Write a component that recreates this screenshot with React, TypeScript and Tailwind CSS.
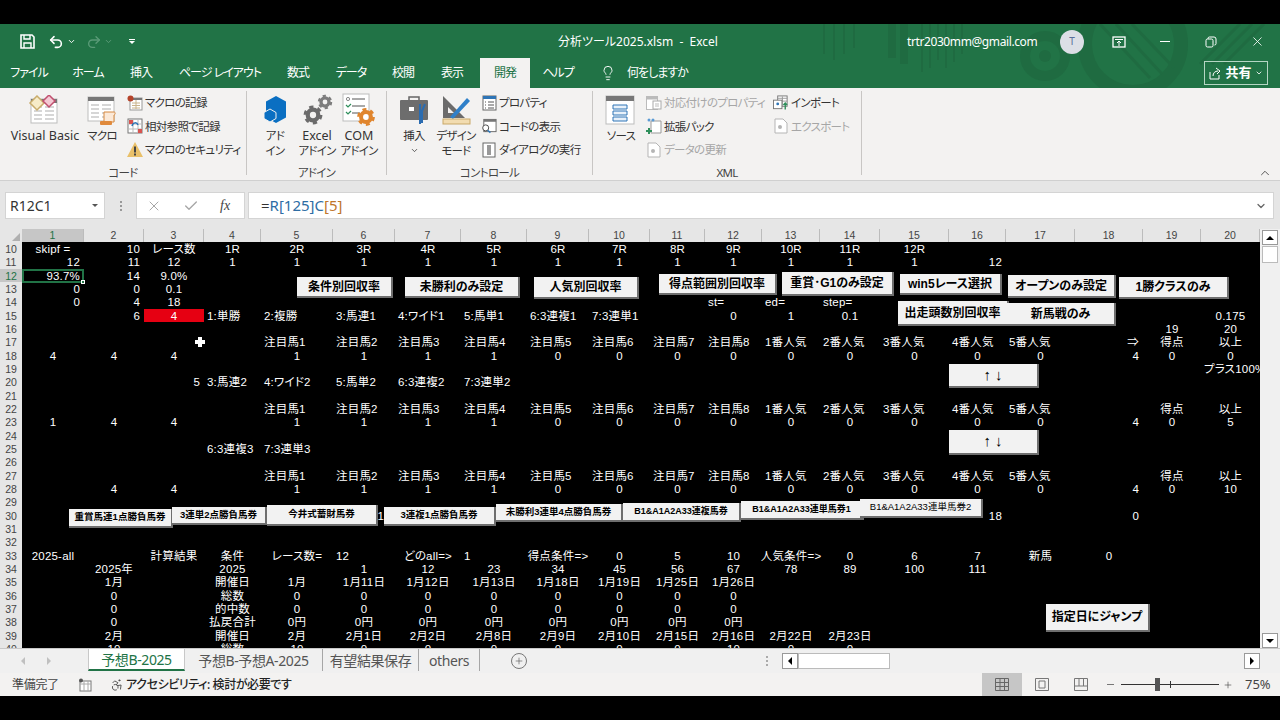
import { Accessibility, ChevronDown, ChevronUp, Lightbulb, Plus, Redo2, Undo2, X, Check } from 'lucide-react';
import React from 'react';

type Cell = { c: number; t: string; a?: 'l' | 'r' | 'c' | 'x'; red?: boolean };

const alignClass = {
  c: 'justify-center',
  l: 'justify-start pl-[3px]',
  r: 'justify-end pr-[4px]',
  x: 'justify-end pr-[11px]',
};

const colNames = Array.from({ length: 20 }, (_, i) => i + 1);
const gridCols = 'grid grid-cols-[62px_60px_60px_57px_72px_62px_66px_66px_62px_61px_55px_57px_58px_60px_69px_57px_69px_68px_58px_59px]';

const seq = (start: number, list: (string | number)[], a?: Cell['a']): Cell[] =>
  list.map((t, i) => ({ c: start + i, t: String(t), a }));

const watch = (): Cell[] =>
  seq(5, ['注目馬1', '注目馬2', '注目馬3', '注目馬4', '注目馬5', '注目馬6', '注目馬7', '注目馬8', '1番人気', '2番人気', '3番人気', '4番人気', '5番人気'], 'l');

const vals = [1, 1, 1, 1, 0, 0, 0, 0, 0, 0, 0, 0, 0];

const rows: Record<number, Cell[]> = {
  10: [
    { c: 1, t: 'skipf =' },
    { c: 2, t: '10', a: 'r' },
    { c: 3, t: 'レース数' },
    ...seq(4, ['1R', '2R', '3R', '4R', '5R', '6R', '7R', '8R', '9R', '10R', '11R', '12R']),
  ],
  11: [
    { c: 1, t: '12', a: 'r' },
    { c: 2, t: '11', a: 'r' },
    { c: 3, t: '12' },
    ...seq(4, [1, 1, 1, 1, 1, 1, 1, 1, 1, 1, 1, 1]),
    { c: 16, t: '12', a: 'r' },
  ],
  12: [
    { c: 1, t: '93.7%', a: 'r' },
    { c: 2, t: '14', a: 'r' },
    { c: 3, t: '9.0%' },
  ],
  13: [
    { c: 1, t: '0', a: 'r' },
    { c: 2, t: '0', a: 'r' },
    { c: 3, t: '0.1' },
  ],
  14: [
    { c: 1, t: '0', a: 'r' },
    { c: 2, t: '4', a: 'r' },
    { c: 3, t: '18' },
    { c: 12, t: 'st=', a: 'l' },
    { c: 13, t: 'ed=', a: 'l' },
    { c: 14, t: 'step=', a: 'l' },
  ],
  15: [
    { c: 2, t: '6', a: 'r' },
    { c: 3, t: '4', red: true },
    { c: 4, t: '1:単勝', a: 'l' },
    { c: 5, t: '2:複勝', a: 'l' },
    { c: 6, t: '3:馬連1', a: 'l' },
    { c: 7, t: '4:ワイド1', a: 'l' },
    { c: 8, t: '5:馬単1', a: 'l' },
    { c: 9, t: '6:3連複1', a: 'l' },
    { c: 10, t: '7:3連単1', a: 'l' },
    { c: 12, t: '0' },
    { c: 13, t: '1' },
    { c: 14, t: '0.1' },
    { c: 20, t: '0.175' },
  ],
  16: seq(19, [19, 20]),
  17: [...watch(), { c: 18, t: '⇒', a: 'r' }, ...seq(19, ['得点', '以上'])],
  18: [...seq(1, [4, 4, 4]), ...seq(5, vals), { c: 18, t: '4', a: 'r' }, ...seq(19, [0, 0])],
  19: [{ c: 20, t: 'プラス100%を', a: 'l' }],
  20: [
    { c: 3, t: '5', a: 'r' },
    { c: 4, t: '3:馬連2', a: 'l' },
    { c: 5, t: '4:ワイド2', a: 'l' },
    { c: 6, t: '5:馬単2', a: 'l' },
    { c: 7, t: '6:3連複2', a: 'l' },
    { c: 8, t: '7:3連単2', a: 'l' },
  ],
  22: [...watch(), ...seq(19, ['得点', '以上'])],
  23: [...seq(1, [1, 4, 4]), ...seq(5, vals), { c: 18, t: '4', a: 'r' }, ...seq(19, [0, 5])],
  25: [
    { c: 4, t: '6:3連複3', a: 'l' },
    { c: 5, t: '7:3連単3', a: 'l' },
  ],
  27: [...watch(), ...seq(19, ['得点', '以上'])],
  28: [...seq(2, [4, 4]), ...seq(5, vals), { c: 18, t: '4', a: 'r' }, ...seq(19, [0, 10])],
  30: [
    { c: 6, t: '1', a: 'x' },
    { c: 16, t: '18', a: 'r' },
    { c: 18, t: '0', a: 'r' },
  ],
  33: [
    { c: 1, t: '2025-all' },
    { c: 3, t: '計算結果' },
    { c: 4, t: '条件' },
    { c: 5, t: 'レース数=' },
    { c: 6, t: '12', a: 'l' },
    { c: 7, t: 'どのall=>' },
    { c: 8, t: '1', a: 'l' },
    { c: 9, t: '得点条件=>' },
    ...seq(10, [0, 5, 10]),
    { c: 13, t: '人気条件=>' },
    ...seq(14, [0, 6, 7, '新馬', 0]),
  ],
  34: [
    { c: 2, t: '2025年' },
    { c: 4, t: '2025' },
    ...seq(6, [1, 12, 23, 34, 45, 56, 67, 78, 89, 100, 111]),
  ],
  35: [
    { c: 2, t: '1月' },
    { c: 4, t: '開催日' },
    ...seq(5, ['1月', '1月11日', '1月12日', '1月13日', '1月18日', '1月19日', '1月25日', '1月26日']),
  ],
  36: [{ c: 2, t: '0' }, { c: 4, t: '総数' }, ...seq(5, [0, 0, 0, 0, 0, 0, 0, 0])],
  37: [{ c: 2, t: '0' }, { c: 4, t: '的中数' }, ...seq(5, [0, 0, 0, 0, 0, 0, 0, 0])],
  38: [
    { c: 2, t: '0' },
    { c: 4, t: '払戻合計' },
    ...seq(5, ['0円', '0円', '0円', '0円', '0円', '0円', '0円', '0円']),
  ],
  39: [
    { c: 2, t: '2月' },
    { c: 4, t: '開催日' },
    ...seq(5, ['2月', '2月1日', '2月2日', '2月8日', '2月9日', '2月10日', '2月15日', '2月16日', '2月22日', '2月23日']),
  ],
  40: [{ c: 2, t: '10' }, { c: 4, t: '総数' }, ...seq(5, [10, 0, 0, 0, 0, 0, 0, 10, 0, 0])],
};

const rowNumbers = Array.from({ length: 31 }, (_, i) => i + 10);

const SheetRow = ({ n }: { n: number }) => {
  const cells = rows[n] ?? [];
  return (
    <div className={`${gridCols} h-[13.33px] text-white text-[11.5px] tracking-[0.2px] leading-[15px]`}>
      {colNames.map((col) => {
        const cell = cells.find((x) => x.c === col);
        return (
          <div
            key={col}
            className={`flex whitespace-nowrap h-[13.33px] ${alignClass[cell?.a ?? 'c']} ${cell?.red ? 'bg-[#e60012]' : ''}`}
          >
            {cell?.t}
          </div>
        );
      })}
    </div>
  );
};

const btn = 'absolute flex items-center justify-center whitespace-nowrap bg-[#f2f2f2] text-black font-bold border-b-2 border-r-2 border-[#6e6e6e]';

const Gear = ({ x, y, r, color }: { x: number; y: number; r: number; color: string }) => (
  <g fill="none" stroke={color}>
    <circle cx={x} cy={y} r={r * 0.62} strokeWidth={r * 0.5} />
    <circle cx={x} cy={y} r={r * 0.95} strokeWidth={r * 0.32} strokeDasharray={`${r * 0.5} ${r * 0.5}`} />
  </g>
);

const TableBase = ({ head = '#777' }: { head?: string }) => (
  <>
    <rect x="3" y="4" width="26" height="24" fill="#fff" stroke="#bdbdbd" />
    <rect x="3" y="4" width="26" height="4" fill={head} />
    <path d="M6 12h8M6 16h8M6 20h8M6 24h8M17 12h9M17 16h9M17 20h9M17 24h9" stroke="#c9c9c9" strokeWidth="1.5" />
  </>
);

const VbIcon = () => (
  <svg width="34" height="30" viewBox="0 0 34 30">
    <TableBase />
    <path d="M9 1 16 8l-7 7-7-7z" fill="#f7ecc8" stroke="#c9ad6c" strokeWidth="1.5" />
    <path d="M21 0l6 6-6 6-6-6z" fill="#f4c9d4" stroke="#c0506f" strokeWidth="1.5" />
  </svg>
);

const MacroIcon = () => (
  <svg width="34" height="34" viewBox="0 0 34 34">
    <TableBase />
    <path d="M19 19h10c2 0 1 3 0 3v7h-10z" fill="#fbe9d8" stroke="#d6883f" />
    <rect x="15" y="28" width="12" height="4" rx="1" fill="#e08a3c" />
  </svg>
);

const RecordIcon = () => (
  <svg width="16" height="16" viewBox="0 0 16 16">
    <rect x="3" y="3" width="12" height="12" fill="#fff" stroke="#999" />
    <rect x="3" y="3" width="12" height="2" fill="#777" />
    <path d="M5 8h8M5 10.5h8M5 13h8M9 5v9" stroke="#c9b48c" />
    <circle cx="3.5" cy="3.5" r="3" fill="#b5432a" />
  </svg>
);

const RelativeIcon = () => (
  <svg width="16" height="16" viewBox="0 0 16 16">
    <rect x="1" y="1" width="14" height="14" fill="#fff" stroke="#777" />
    <path d="M1 6h14M1 11h14M6 1v14M11 1v14" stroke="#bbb" />
    <rect x="2" y="2" width="4" height="4" fill="#d9534f" />
    <rect x="11" y="11" width="4" height="4" fill="#d9534f" />
    <path d="M5 8c1-4 5-4 6-1" stroke="#2e75b6" strokeWidth="1.5" fill="none" />
  </svg>
);

const WarnIcon = () => (
  <svg width="16" height="15" viewBox="0 0 16 15">
    <path d="M8 0 16 15H0z" fill="#e9c069" />
    <rect x="7" y="4.5" width="2" height="6" fill="#444" />
    <rect x="7" y="11.5" width="2" height="2" fill="#444" />
  </svg>
);

const AddinIcon = () => (
  <svg width="26" height="30" viewBox="0 0 26 30">
    <path d="M14 1 24 6.5v16L14 28 4 22.5v-16z" fill="#0a6fc2" />
    <path d="M8 14 14 17.5v6L8 27 2 23.5v-6z" fill="#0a6fc2" stroke="#f3f2f1" strokeWidth="1" />
  </svg>
);

const GearsIcon = () => (
  <svg width="32" height="32" viewBox="0 0 32 32">
    <Gear x={12} y={21} r={8.5} color="#6b6b6b" />
    <Gear x={24} y={8} r={6.5} color="#7d7d7d" />
  </svg>
);

const ComIcon = () => (
  <svg width="34" height="34" viewBox="0 0 34 34">
    <rect x="1" y="1" width="26" height="27" fill="#fff" stroke="#bdbdbd" />
    <path d="M10 6h13M10 13h13M10 20h8" stroke="#555" strokeWidth="1.2" />
    <circle cx="6" cy="6" r="1.6" fill="none" stroke="#888" />
    <path d="M4 12l2 2 3-3M4 19l2 2 3-3" stroke="#2f8f5b" strokeWidth="1.2" fill="none" />
    <Gear x={24} y={24} r={8} color="#e0852d" />
  </svg>
);

const ToolboxIcon = () => (
  <svg width="30" height="32" viewBox="0 0 30 32">
    <path d="M10 6V3h10v3" stroke="#666" strokeWidth="1.5" fill="none" />
    <rect x="1" y="6" width="28" height="20" rx="1" fill="#6d6d6d" />
    <rect x="10" y="13" width="5" height="4" fill="#fff" />
    <path d="M21 10v20M26 10l-3 7v12" stroke="#2b6cb0" strokeWidth="2" fill="none" />
  </svg>
);

const DesignIcon = () => (
  <svg width="30" height="32" viewBox="0 0 30 32">
    <path d="M2 2v22h22z" fill="#6b6b6b" />
    <path d="M7 13v6h6z" fill="#f3f2f1" />
    <path d="M9 23 26 4l3 3-17 18z" fill="#2f80c9" />
    <rect x="2" y="25" width="27" height="5" fill="#f2dcb0" stroke="#c9a869" />
  </svg>
);

const PropsIcon = () => (
  <svg width="15" height="16" viewBox="0 0 15 16">
    <rect x="1" y="1" width="13" height="14" fill="#fff" stroke="#666" />
    <rect x="1" y="1" width="13" height="3" fill="#2e75b6" />
    <path d="M3 7h1M6 7h6M3 10h1M6 10h6M3 13h1M6 13h6" stroke="#555" />
  </svg>
);

const CodeIcon = () => (
  <svg width="17" height="16" viewBox="0 0 17 16">
    <rect x="3" y="1" width="13" height="13" fill="#fff" stroke="#666" />
    <rect x="3" y="1" width="13" height="2.5" fill="#777" />
    <circle cx="5" cy="10" r="3.2" fill="#fff" stroke="#444" />
    <path d="M7 12.5 10 15" stroke="#2e75b6" strokeWidth="1.5" />
  </svg>
);

const DialogIcon = () => (
  <svg width="14" height="16" viewBox="0 0 14 16">
    <rect x="1" y="1" width="12" height="14" fill="#fff" stroke="#666" />
    <rect x="5" y="3" width="4" height="10" fill="#999" />
  </svg>
);

const SourceIcon = () => (
  <svg width="32" height="30" viewBox="0 0 32 30">
    <rect x="1" y="1" width="28" height="28" fill="#fff" stroke="#bdbdbd" />
    <rect x="1" y="1" width="28" height="5" fill="#777" />
    <path d="M8 10h14v4H8zM8 16h14v4H8zM8 22h14v4H8z" fill="#e8f1fa" stroke="#2e75b6" />
  </svg>
);

const DocIcon = ({ color }: { color: string }) => (
  <svg width="16" height="16" viewBox="0 0 16 16">
    <path d="M2 1h8l4 4v10H2z" fill="#fff" stroke={color} />
    <circle cx="7" cy="9" r="2" fill={color} />
  </svg>
);

const MapPropsIcon = () => (
  <svg width="16" height="14" viewBox="0 0 16 14">
    <rect x="0.5" y="0.5" width="11" height="13" fill="#fff" stroke="#bbb" />
    <rect x="0.5" y="0.5" width="11" height="3" fill="#bbb" />
    <rect x="7" y="5" width="8" height="8" fill="#fff" stroke="#aaa" />
    <path d="M9 8h4M9 10h4" stroke="#bbb" />
  </svg>
);

const PackIcon = () => (
  <svg width="16" height="17" viewBox="0 0 16 17">
    <path d="M5 3h10v12H5z" fill="#fff" stroke="#999" />
    <circle cx="3" cy="2" r="1.5" fill="#5b9bd5" />
    <circle cx="7" cy="2" r="1.5" fill="#5b9bd5" />
    <path d="M3 10v6M0 13h6" stroke="#2f8f5b" strokeWidth="2" />
  </svg>
);

const ImportIcon = () => (
  <svg width="17" height="16" viewBox="0 0 17 16">
    <rect x="5" y="0.5" width="10" height="11" fill="#fff" stroke="#777" />
    <path d="M5 3h10M5 6h10M10 1v10" stroke="#999" />
    <rect x="0.5" y="5" width="9" height="9" fill="#fff" stroke="#777" />
    <circle cx="5" cy="9" r="1.5" fill="#2e75b6" />
    <path d="M13 15V8m-2 2 2-2 2 2" stroke="#2f8f5b" strokeWidth="1.5" fill="none" />
  </svg>
);

const Latin = ({ children }: { children: string }) => (
  <span className="tracking-normal text-[12.5px]">{children}</span>
);

const LargeBtn = ({ w, icon, lines }: { w: string; icon: React.ReactNode; lines: React.ReactNode[] }) => (
  <div className={`flex flex-col items-center shrink-0 ${w}`}>
    <div className="h-[37px] flex items-center justify-center">{icon}</div>
    {lines.map((l, i) => (
      <div key={i} className="h-[15px] leading-[15px] whitespace-nowrap">{l}</div>
    ))}
  </div>
);

const SmallBtn = ({ icon, label, muted }: { icon: React.ReactNode; label: string; muted?: boolean }) => (
  <div className={`flex items-center h-[23.5px] whitespace-nowrap ${muted ? 'text-[#a6a6a6]' : ''}`}>
    <div className="w-[16px] flex justify-center mr-[2px] shrink-0">{icon}</div>
    {label}
  </div>
);

const RibbonGroup = ({ w, label, children }: { w: string; label: string; children: React.ReactNode }) => (
  <div className={`flex flex-col shrink-0 ${w}`}>
    <div className="h-[74px] flex">{children}</div>
    <div className="h-[15px] leading-[16px] text-center text-[#444]">{label}</div>
  </div>
);

const Sep = () => <div className="w-px h-[84px] bg-[#c8c6c4] shrink-0" />;

const Space = ({ w }: { w: string }) => <div className={`${w} shrink-0`} />;

const tabs = [
  { t: 'ファイル', w: 'w-[58px]' },
  { t: 'ホーム', w: 'w-[60px]' },
  { t: '挿入', w: 'w-[46px]' },
  { t: 'ページ レイアウト', w: 'w-[112px]' },
  { t: '数式', w: 'w-[44px]' },
  { t: 'データ', w: 'w-[62px]' },
  { t: '校閲', w: 'w-[42px]' },
  { t: '表示', w: 'w-[56px]' },
  { t: '開発', w: 'w-[50px]', active: true },
  { t: 'ヘルプ', w: 'w-[56px]' },
];

const sheetTabs = [
  { t: '予想B-2025', w: 'w-[97px]', active: true },
  { t: '予想B-予想A-2025', w: 'w-[138px]' },
  { t: '有望結果保存', w: 'w-[96px]' },
  { t: 'others', w: 'w-[61px]' },
];

export default function App() {
  return (
    <div className="w-[1280px] h-[720px] bg-black flex flex-col pt-[24px] overflow-hidden font-['Noto_Sans','Noto_Sans_CJK_JP',sans-serif] [font-feature-settings:'palt']">
      {/* title bar + tabs */}
      <div className="relative h-[64px] bg-[#217346] text-white shrink-0 overflow-hidden">
        <svg className="absolute left-[800px] top-0" width="480" height="64" viewBox="0 0 480 64" fill="none">
          <g stroke="#1f6b41" strokeWidth="4">
            <path d="M24 0v30M34 0v36M44 0v30M54 0v24" strokeWidth="2" />
            <path d="M92 0v34M104 0v40" strokeWidth="8" />
            <path d="M122 0v48M130 0v44M138 0v36M146 0v44M154 0v38M162 0v30" strokeWidth="2" />
          </g>
          <circle cx="245" cy="32" r="20" stroke="#1f6b41" strokeWidth="10" />
          <circle cx="245" cy="32" r="6" fill="#1f6b41" />
          <circle cx="333" cy="20" r="48" stroke="#1f6b41" strokeWidth="14" />
          <path d="M300 0l50 54M316 0l46 50M332 0l42 44M400 40 440 0M412 40 452 0M424 40 464 0" stroke="#1f6b41" strokeWidth="3" />
        </svg>
        <div className="relative h-[34px] flex items-center pl-[20px] pt-[1px]">
          <svg width="15" height="15" viewBox="0 0 15 15" fill="none" className="mr-[13px] shrink-0">
            <path d="M1 1h11l2 2v11H1z" stroke="#fff" strokeWidth="1.6" />
            <path d="M4 1v4h6V1M4 14V9h7v5" stroke="#fff" strokeWidth="1.4" />
          </svg>
          <Undo2 size={16} strokeWidth={2.4} className="shrink-0" />
          <ChevronDown size={9} strokeWidth={2.5} className="ml-[3px] mr-[10px] shrink-0" />
          <Redo2 size={16} strokeWidth={2} className="text-[#5b9b78] shrink-0" />
          <ChevronDown size={9} strokeWidth={2.5} className="ml-[2px] mr-[16px] text-[#5b9b78] shrink-0" />
          <div className="flex flex-col items-center gap-[1px] mr-[423px] shrink-0">
            <div className="w-[6px] h-px bg-white" />
            <div className="w-0 h-0 border-x-[3px] border-x-transparent border-t-[3px] border-t-white" />
          </div>
          <div className="text-[12px] whitespace-pre w-[164px] shrink-0">分析ツール2025.xlsm  -  Excel</div>
          <div className="ml-[185px] text-[12px] tracking-[-0.4px] whitespace-nowrap w-[143px] shrink-0">trtr2030mm@gmail.com</div>
          <div className="ml-[10px] w-[24px] h-[24px] rounded-full bg-[#dcdfe6] text-[#5a6f9a] text-[10px] flex items-center justify-center shrink-0">T</div>
          <svg width="14" height="12" viewBox="0 0 14 12" fill="none" className="ml-[28px] shrink-0">
            <rect x="1" y="1" width="12" height="10" stroke="#fff" strokeWidth="1.3" />
            <path d="M3 3.5h8M7 10V5M5 7l2-2 2 2" stroke="#fff" />
          </svg>
          <div className="ml-[34px] w-[10px] h-px bg-white shrink-0" />
          <svg width="12" height="12" viewBox="0 0 12 12" fill="none" className="ml-[35px] shrink-0">
            <rect x="1" y="3" width="7" height="8" rx="1.5" stroke="#fff" />
            <path d="M3 3V2.5A1.5 1.5 0 0 1 4.5 1H9a2 2 0 0 1 2 2v4.5A1.5 1.5 0 0 1 9.5 9" stroke="#fff" />
          </svg>
          <X size={15} strokeWidth={1.3} className="ml-[33px] shrink-0" />
        </div>
        <div className="relative h-[30px] flex items-stretch text-[12px] tracking-[-1px]">
          {tabs.map((tab) => (
            <div
              key={tab.t}
              className={`${tab.w} flex items-center justify-center whitespace-nowrap shrink-0 ${tab.active ? 'bg-[#f3f2f1] text-[#217346]' : ''}`}
            >
              {tab.t}
            </div>
          ))}
          <Lightbulb size={16} strokeWidth={1.4} className="self-center ml-[14px] mr-[11px] shrink-0" />
          <div className="self-center whitespace-nowrap w-[61px] shrink-0">何をしますか</div>
          <div className="ml-[516px] mt-[3px] mb-[3px] w-[64px] shrink-0 border border-[#b5d6c4] flex items-center justify-center gap-[3px] tracking-normal">
            <svg width="13" height="13" viewBox="0 0 13 13" fill="none" stroke="#fff">
              <path d="M1 5v7h9V8" />
              <path d="M4 9c0-3 2-5 5-5M7 1l4 3-3 3" />
            </svg>
            <span className="font-bold text-[13px]">共有</span>
            <ChevronDown size={8} strokeWidth={2.5} />
          </div>
        </div>
      </div>

      {/* ribbon */}
      <div className="h-[92px] bg-[#f3f2f1] shrink-0 flex pt-[3px] text-[11.5px] tracking-[-0.7px] text-[#333]">
        <RibbonGroup w="w-[246px]" label="コード">
          <Space w="w-[6px]" />
          <LargeBtn w="w-[78px]" icon={<VbIcon />} lines={[<Latin key="l">Visual Basic</Latin>]} />
          <LargeBtn w="w-[36px]" icon={<MacroIcon />} lines={['マクロ']} />
          <div className="ml-[7px] flex flex-col">
            <SmallBtn icon={<RecordIcon />} label="マクロの記録" />
            <SmallBtn icon={<RelativeIcon />} label="相対参照で記録" />
            <SmallBtn icon={<WarnIcon />} label="マクロのセキュリティ" />
          </div>
        </RibbonGroup>
        <Sep />
        <RibbonGroup w="w-[139px]" label="アドイン">
          <Space w="w-[11px]" />
          <LargeBtn w="w-[34px]" icon={<AddinIcon />} lines={['アド', 'イン']} />
          <Space w="w-[3px]" />
          <LargeBtn w="w-[44px]" icon={<GearsIcon />} lines={[<Latin key="l">Excel</Latin>, 'アドイン']} />
          <LargeBtn w="w-[40px]" icon={<ComIcon />} lines={[<Latin key="l">COM</Latin>, 'アドイン']} />
        </RibbonGroup>
        <Sep />
        <RibbonGroup w="w-[205px]" label="コントロール">
          <Space w="w-[10px]" />
          <LargeBtn w="w-[34px]" icon={<ToolboxIcon />} lines={['挿入', <ChevronDown key="c" size={9} strokeWidth={2} className="mt-[3px]" />]} />
          <LargeBtn w="w-[50px]" icon={<DesignIcon />} lines={['デザイン', 'モード']} />
          <div className="flex flex-col">
            <SmallBtn icon={<PropsIcon />} label="プロパティ" />
            <SmallBtn icon={<CodeIcon />} label="コードの表示" />
            <SmallBtn icon={<DialogIcon />} label="ダイアログの実行" />
          </div>
        </RibbonGroup>
        <Sep />
        <RibbonGroup w="w-[268px]" label="XML">
          <Space w="w-[10px]" />
          <LargeBtn w="w-[36px]" icon={<SourceIcon />} lines={['ソース']} />
          <div className="ml-[7px] w-[127px] shrink-0 flex flex-col">
            <SmallBtn icon={<MapPropsIcon />} label="対応付けのプロパティ" muted />
            <SmallBtn icon={<PackIcon />} label="拡張パック" />
            <SmallBtn icon={<DocIcon color="#b5b5b5" />} label="データの更新" muted />
          </div>
          <div className="flex flex-col">
            <SmallBtn icon={<ImportIcon />} label="インポート" />
            <SmallBtn icon={<DocIcon color="#b5b5b5" />} label="エクスポート" muted />
          </div>
        </RibbonGroup>
        <Sep />
        <ChevronUp size={14} strokeWidth={1.5} className="ml-auto mr-[8px] mt-[75px] text-[#444]" />
      </div>

      {/* formula bar */}
      <div className="h-[49px] bg-[#e6e6e6] border-t border-[#d0d0d0] shrink-0 flex pt-[11px] pb-[10px] pl-[5px] pr-[6px]">
        <div className="w-[100px] bg-white border border-[#d4d4d4] flex items-center justify-between pl-[4px] pr-[6px] text-[14px] text-[#333]">
          <span>R12C1</span>
          <div className="w-0 h-0 border-x-[3px] border-x-transparent border-t-[3px] border-t-[#555]" />
        </div>
        <div className="w-[31px] flex flex-col items-center justify-center gap-[2px]">
          <div className="w-[2px] h-[2px] bg-[#999]" />
          <div className="w-[2px] h-[2px] bg-[#999]" />
          <div className="w-[2px] h-[2px] bg-[#999]" />
        </div>
        <div className="w-[109px] bg-white border border-[#d4d4d4] flex items-center pl-[9px] text-[#a6a6a6]">
          <X size={16} strokeWidth={1.5} />
          <Check size={16} strokeWidth={2} className="ml-[21px]" />
          <span className="ml-[21px] text-[#444] text-[14px] italic font-['Liberation_Serif',serif]">fx</span>
        </div>
        <div className="ml-[3px] flex-1 bg-white border border-[#d4d4d4] flex items-center justify-between pl-[12px] pr-[6px] text-[15px] text-[#333]">
          <span>=<span className="text-[#2e6da4]">R[125]</span><span className="text-[#2e6da4]">C</span><span className="text-[#c0762b]">[5]</span></span>
          <ChevronDown size={12} strokeWidth={2.5} className="text-[#666]" />
        </div>
      </div>

      {/* sheet */}
      <div className="h-[419px] shrink-0 flex">
        <div className="w-[1260px] flex flex-col font-['Liberation_Sans','Noto_Sans_CJK_JP',sans-serif] [font-feature-settings:'normal']">
          <div className="h-[13px] bg-[#e6e6e6] flex">
            <div className="w-[22px] relative">
              <div className="absolute right-[2px] bottom-[1px] w-0 h-0 border-l-[8px] border-l-transparent border-b-[8px] border-b-[#b0b0b0]" />
            </div>
            <div className={`${gridCols} flex-1 text-[10.5px] leading-[13px] text-[#444]`}>
              {colNames.map((c) => (
                <div
                  key={c}
                  className={`text-center border-r border-[#bcbcbc] ${c === 1 ? 'bg-[#c6c6c6] border-b-2 border-b-[#217346] text-[#217346]' : ''}`}
                >
                  {c}
                </div>
              ))}
            </div>
          </div>
          <div className="flex h-[406px]">
            <div className="w-[22px] bg-[#e6e6e6] overflow-hidden text-[10.5px] text-[#444]">
              {rowNumbers.map((n) => (
                <div
                  key={n}
                  className={`h-[13.33px] leading-[15px] text-center ${n === 12 ? 'bg-[#c6c6c6] text-[#217346]' : ''}`}
                >
                  {n}
                </div>
              ))}
            </div>
            <div className="relative w-[1238px] bg-black overflow-hidden">
              {rowNumbers.map((n) => (
                <SheetRow key={n} n={n} />
              ))}
              {/* selected cell */}
              <div className="absolute left-0 top-[26.5px] w-[62px] h-[14px] border-2 border-[#217346]" />
              <div className="absolute left-[59px] top-[38px] w-[4px] h-[4px] bg-[#217346] border border-white" />
              {/* cursor */}
              <div className="absolute left-[173px] top-[98px] w-[10px] h-[4px] bg-white" />
              <div className="absolute left-[176px] top-[95px] w-[4px] h-[10px] bg-white" />

              {/* form buttons */}
              <div className={`${btn} left-[275px] top-[35px] w-[96px] h-[21px] text-[12px]`}>条件別回収率</div>
              <div className={`${btn} left-[383px] top-[35px] w-[115px] h-[21px] text-[12px]`}>未勝利のみ設定</div>
              <div className={`${btn} left-[512px] top-[35px] w-[105px] h-[22px] text-[12px]`}>人気別回収率</div>
              <div className={`${btn} left-[637px] top-[32px] w-[118px] h-[21px] text-[12px]`}>得点範囲別回収率</div>
              <div className={`${btn} left-[760px] top-[30px] w-[112px] h-[24px] text-[12px]`}>重賞･G1のみ設定</div>
              <div className={`${btn} left-[878px] top-[32px] w-[102px] h-[21px] text-[12px]`}>win5レース選択</div>
              <div className={`${btn} left-[876px] top-[59px] w-[111px] h-[25px] text-[12px]`}>出走頭数別回収率</div>
              <div className={`${btn} left-[986px] top-[33px] w-[108px] h-[23px] text-[12px]`}>オープンのみ設定</div>
              <div className={`${btn} left-[1097px] top-[35px] w-[110px] h-[22px] text-[12px]`}>1勝クラスのみ</div>
              <div className={`${btn} left-[985px] top-[61px] w-[109px] h-[23px] text-[12px]`}>新馬戦のみ</div>
              <div className={`${btn} left-[927px] top-[122px] w-[90px] h-[24px] text-[15px] whitespace-pre`}>↑ ↓</div>
              <div className={`${btn} left-[927px] top-[188px] w-[90px] h-[25px] text-[15px] whitespace-pre`}>↑ ↓</div>

              <div className={`${btn} left-[47px] top-[267px] w-[104px] h-[19px] text-[9.5px]`}>重賞馬連1点勝負馬券</div>
              <div className={`${btn} left-[150px] top-[265px] w-[95px] h-[18px] text-[9.5px]`}>3連単2点勝負馬券</div>
              <div className={`${btn} left-[245px] top-[263px] w-[111px] h-[21px] text-[9.5px]`}>今井式蓄財馬券</div>
              <div className={`${btn} left-[362px] top-[265px] w-[112px] h-[19px] text-[9.5px]`}>3連複1点勝負馬券</div>
              <div className={`${btn} left-[474px] top-[262px] w-[127px] h-[18px] text-[9.5px]`}>未勝利3連単4点勝負馬券</div>
              <div className={`${btn} left-[601px] top-[261px] w-[118px] h-[19px] text-[9px]`}>B1&A1A2A33連複馬券</div>
              <div className={`${btn} left-[719px] top-[259px] w-[123px] h-[19px] text-[9px]`}>B1&A1A2A33連単馬券1</div>
              <div className={`${btn} left-[838px] top-[257px] w-[123px] h-[19px] text-[9.5px] font-normal`}>B1&A1A2A33連単馬券2</div>
              <div className={`${btn} left-[1024px] top-[362px] w-[104px] h-[28px] text-[12px]`}>指定日にジャンプ</div>
            </div>
          </div>
        </div>
        <div className="w-[20px] bg-[#f0f0f0] flex flex-col items-center pt-[1px]">
          <div className="w-[16px] h-[15px] bg-white border border-[#999] flex items-center justify-center">
            <div className="w-0 h-0 border-x-[4px] border-x-transparent border-b-[4px] border-b-black" />
          </div>
          <div className="w-[16px] h-[17px] mt-px bg-white border border-[#bbb]" />
          <div className="flex-1" />
          <div className="w-[16px] h-[15px] bg-white border border-[#999] flex items-center justify-center">
            <div className="w-0 h-0 border-x-[4px] border-x-transparent border-t-[4px] border-t-black" />
          </div>
        </div>
      </div>

      {/* sheet tabs */}
      <div className="h-[25px] bg-[#f0f0f0] border-t border-[#c8c8c8] shrink-0 flex items-stretch text-[#555]">
        <div className="w-[88px] flex items-center pl-[21px] gap-[22px] text-[#c0c0c0]">
          <div className="w-0 h-0 border-y-[4px] border-y-transparent border-r-[4px] border-r-[#c0c0c0]" />
          <div className="w-0 h-0 border-y-[4px] border-y-transparent border-l-[4px] border-l-[#c0c0c0]" />
        </div>
        {sheetTabs.map((tab) => (
          <div
            key={tab.t}
            className={`${tab.w} flex items-center justify-center whitespace-nowrap text-[14px] tracking-[-0.4px] mb-[2px] border-r border-[#a6a6a6] ${tab.active ? 'bg-white text-[#217346] border-b-2 border-b-[#217346] border-x border-x-[#c8c8c8]' : ''}`}
          >
            {tab.t}
          </div>
        ))}
        <div className="ml-[31px] self-center w-[16px] h-[16px] rounded-full border border-[#777] flex items-center justify-center">
          <Plus size={10} strokeWidth={1.5} />
        </div>
        <div className="ml-[239px] self-center flex flex-col gap-[2px]">
          <div className="w-[2px] h-[2px] bg-[#aaa]" />
          <div className="w-[2px] h-[2px] bg-[#aaa]" />
          <div className="w-[2px] h-[2px] bg-[#aaa]" />
        </div>
        <div className="ml-[14px] my-[4px] w-[478px] flex">
          <div className="w-[16px] bg-white border border-[#999] flex items-center justify-center">
            <div className="w-0 h-0 border-y-[4px] border-y-transparent border-r-[4px] border-r-black" />
          </div>
          <div className="w-[92px] bg-white border border-[#bbb]" />
          <div className="flex-1" />
          <div className="w-[16px] bg-white border border-[#999] flex items-center justify-center">
            <div className="w-0 h-0 border-y-[4px] border-y-transparent border-l-[4px] border-l-black" />
          </div>
        </div>
      </div>

      {/* status bar */}
      <div className="h-[23px] bg-[#f3f2f1] shrink-0 flex items-stretch text-[12px] text-[#444]">
        <div className="ml-[12px] self-center w-[48px] whitespace-nowrap tracking-[-0.3px]">準備完了</div>
        <svg width="14" height="14" viewBox="0 0 14 14" className="ml-[18px] self-center">
          <rect x="2" y="3" width="11" height="10" fill="#fff" stroke="#777" />
          <path d="M2 6h11M6 3v10M10 3v10" stroke="#aaa" />
          <circle cx="3" cy="2.5" r="2" fill="#555" />
        </svg>
        <Accessibility size={14} strokeWidth={1.5} className="ml-[18px] self-center" />
        <div className="ml-[2px] self-center whitespace-nowrap text-[#222] font-medium tracking-[-0.4px]">アクセシビリティ: 検討が必要です</div>
        <div className="ml-auto w-[40px] bg-[#c6c6c6] flex items-center justify-center">
          <svg width="14" height="13" viewBox="0 0 14 13" fill="none" stroke="#666">
            <path d="M.5.5h13v12H.5zM.5 4.5h13M.5 8.5h13M5 .5v12M9.5.5v12" />
          </svg>
        </div>
        <div className="w-[40px] flex items-center justify-center">
          <svg width="14" height="13" viewBox="0 0 14 13" fill="none" stroke="#777">
            <path d="M.5.5h13v12H.5zM4 3h6v7H4z" />
          </svg>
        </div>
        <div className="w-[38px] flex items-center justify-center">
          <svg width="14" height="13" viewBox="0 0 14 13" fill="none" stroke="#777">
            <path d="M.5.5h13v12H.5zM.5 8h13M5 .5V8M9.5.5V8" />
          </svg>
        </div>
        <div className="w-[7px] h-px bg-[#777] self-center ml-[7px]" />
        <div className="relative ml-[7px] w-[98px] h-px bg-[#333] self-center">
          <div className="absolute left-[34px] top-[-6px] w-[5px] h-[13px] bg-[#555]" />
          <div className="absolute left-[49px] top-[-3px] w-px h-[7px] bg-[#333]" />
        </div>
        <Plus size={10} strokeWidth={1.5} className="self-center ml-[4px]" />
        <div className="ml-[12px] self-center w-[35px] whitespace-nowrap text-[13px]">75%</div>
      </div>
    </div>
  );
}
